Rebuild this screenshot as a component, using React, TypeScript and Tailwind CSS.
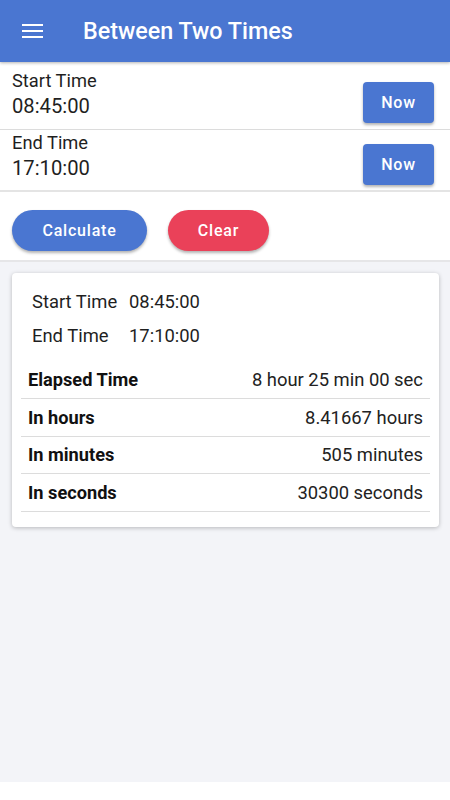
import React from "react";

const FONT = { fontFamily: "Roboto, 'Liberation Sans', sans-serif" };

function TimeRow({
  label,
  value,
  top,
  btnTop,
  bottom,
  border,
}: {
  label: string;
  value: string;
  top: string;
  btnTop: string;
  bottom: string;
  border: string;
}) {
  return (
    <div className={`flex items-start justify-between pl-3 pr-4 bg-white ${border}`}>
      <div className={`flex flex-col ${top} ${bottom}`}>
        <span className="text-[18.3px] leading-[22px] text-[#1f1f1f]">{label}</span>
        <span className="mt-px text-[20.2px] leading-[26px] text-[#1f1f1f]">{value}</span>
      </div>
      <button
        className={`${btnTop} w-[71px] h-[41px] rounded-[4px] bg-[#4a76d1] text-white text-[16px] font-medium tracking-wider shadow-[0_2px_3px_rgba(0,0,0,0.3)]`}
      >
        Now
      </button>
    </div>
  );
}

function ResultRow({ label, value }: { label: string; value: string }) {
  return (
    <div className="flex items-center justify-between h-[37.67px] px-[7px] border-b border-[#dcdcdc]">
      <span className="text-[18.2px] font-bold text-[#111]">{label}</span>
      <span className="text-[18.4px] text-[#222]">{value}</span>
    </div>
  );
}

export default function App() {
  return (
    <div style={FONT} className="w-[450px] h-[800px] bg-white">
      <div className="h-[782px] bg-[#f3f4f8] flex flex-col">
        {/* App bar */}
        <div className="relative z-10 h-[62px] shrink-0 flex items-center bg-[#4a76d1] shadow-[0_1px_3px_rgba(0,0,0,0.3)]">
          <svg width="21" height="14" viewBox="0 0 21 14" className="ml-[22px]" fill="#fff">
            <rect x="0" y="0" width="21" height="2" />
            <rect x="0" y="6" width="21" height="2" />
            <rect x="0" y="12" width="21" height="2" />
          </svg>
          <h1 className="ml-[40px] text-[23.3px] font-medium text-white">Between Two Times</h1>
        </div>

        <TimeRow
          label="Start Time"
          value="08:45:00"
          top="pt-2"
          btnTop="mt-[20px]"
          bottom="pb-[10px]"
          border="border-b border-[#dcdcdc]"
        />
        <TimeRow
          label="End Time"
          value="17:10:00"
          top="pt-[2px]"
          btnTop="mt-[14px]"
          bottom="pb-[9px]"
          border="border-b-2 border-[#e4e4e4]"
        />

        {/* Actions */}
        <div className="flex items-center gap-[21px] pl-3 pt-[18px] pb-[9px] bg-white border-b-2 border-[#e6e6e8]">
          <button className="w-[135px] h-[41px] rounded-full bg-[#4a76d1] text-white text-[16px] font-medium tracking-wider shadow-[0_2px_3px_rgba(0,0,0,0.3)]">
            Calculate
          </button>
          <button className="w-[101px] h-[41px] rounded-full bg-[#ea4159] text-white text-[16px] font-medium tracking-wider shadow-[0_2px_3px_rgba(0,0,0,0.3)]">
            Clear
          </button>
        </div>

        {/* Result card */}
        <div className="ml-3 mr-[11px] mt-[11px] bg-white rounded-[4px] shadow-[0_1px_4px_rgba(0,0,0,0.25)] px-[9px] pt-[11.5px] pb-[14.5px]">
          <div className="pl-[11px]">
            <div className="flex items-center h-[34px] text-[18.4px] text-[#1f1f1f]">
              <span className="w-[97px]">Start Time</span>
              <span>08:45:00</span>
            </div>
            <div className="flex items-center h-[34px] text-[18.4px] text-[#1f1f1f]">
              <span className="w-[97px]">End Time</span>
              <span>17:10:00</span>
            </div>
          </div>
          <div className="mt-[9px]">
            <ResultRow label="Elapsed Time" value="8 hour 25 min 00 sec" />
            <ResultRow label="In hours" value="8.41667 hours" />
            <ResultRow label="In minutes" value="505 minutes" />
            <ResultRow label="In seconds" value="30300 seconds" />
          </div>
        </div>
      </div>
    </div>
  );
}
